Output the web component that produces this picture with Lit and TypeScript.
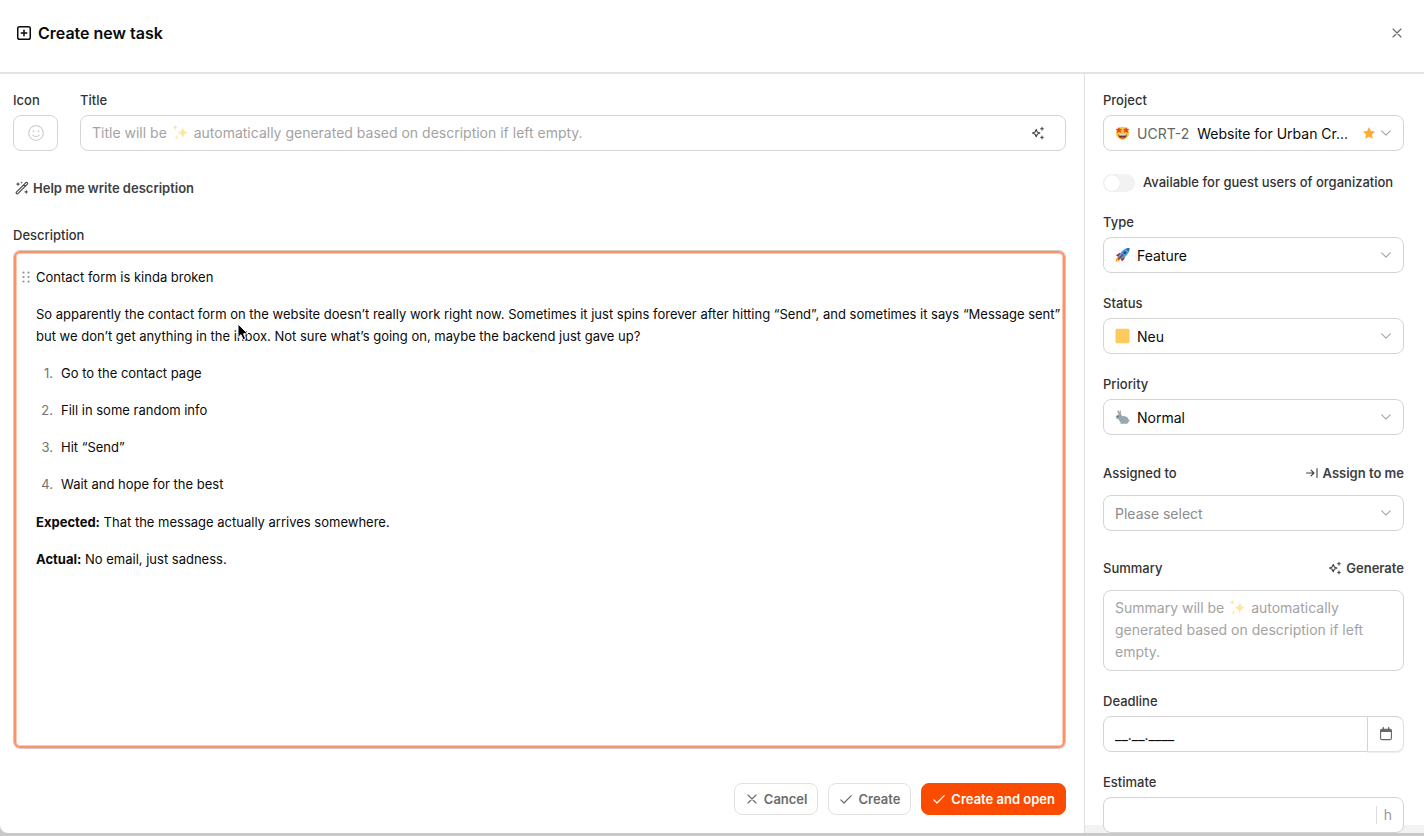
import { LitElement, html, css, svg, TemplateResult } from "lit";
import { customElement } from "lit/decorators.js";

const icon = (size: number, box: string, body: TemplateResult, cls = "") =>
  html`<svg class="icon ${cls}" width=${size} height=${size} viewBox=${box} aria-hidden="true">${body}</svg>`;

const plusBox = icon(16, "0 0 16 16", svg`<g fill="none" stroke="currentColor" stroke-width="1.5" stroke-linecap="round"><rect x="1.75" y="1.75" width="12.5" height="12.5" rx="1.8"/><path d="M8 5.2v5.6M5.2 8h5.6"/></g>`);
const cross = icon(12, "0 0 12 12", svg`<path d="M2 2l8 8M10 2l-8 8" fill="none" stroke="currentColor" stroke-width="1.1" stroke-linecap="round"/>`);
const check = icon(14, "0 0 14 14", svg`<path d="M1.8 7.8l3.2 3.2L12.2 3.6" fill="none" stroke="currentColor" stroke-width="1.2" stroke-linecap="round" stroke-linejoin="round"/>`);
const chevron = icon(10, "0 0 10 10", svg`<path d="M.7 2.8L5 7.1l4.3-4.3" fill="none" stroke="#a3a3a3" stroke-width="1.1" stroke-linecap="round" stroke-linejoin="round"/>`);
const smile = icon(18, "0 0 18 18", svg`<g fill="none" stroke="#d2d2d2" stroke-width="1.3" stroke-linecap="round"><circle cx="9" cy="9" r="7.3"/><path d="M5.8 11.2c1.6 2 4.8 2 6.4 0"/></g><circle cx="6.5" cy="7.2" r="1" fill="#d2d2d2"/><circle cx="11.5" cy="7.2" r="1" fill="#d2d2d2"/>`);
const wand = icon(14, "0 0 14 14", svg`<g fill="none" stroke="currentColor" stroke-width="1.1" stroke-linecap="round" stroke-linejoin="round"><path d="M1.4 11.2L10.9 1.7a.9.9 0 0 1 1.3 0l.2.2a.9.9 0 0 1 0 1.3L2.9 12.7a.9.9 0 0 1-1.3 0l-.2-.2a.9.9 0 0 1 0-1.3zM8.8 3.9l1.5 1.5"/></g><path d="M3 .8l.6 1.7 1.7.6-1.7.6L3 5.4l-.6-1.7-1.7-.6 1.7-.6zM11.2 8.6l.6 1.7 1.7.6-1.7.6-.6 1.7-.6-1.7-1.7-.6 1.7-.6zM6.6.5l.3.8.8.3-.8.3-.3.8-.3-.8-.8-.3.8-.3z" fill="currentColor"/>`);
const generate = icon(14, "0 0 14 14", svg`<path d="M5.200 3.400l1.100 2.600 2.600 1.100-2.600 1.100-1.100 2.600-1.100-2.600L1.500 7.100 4.100 6z" fill="none" stroke="currentColor" stroke-width="1.1" stroke-linejoin="round"/><path d="M11 .8l.5 1.500 1.500.5-1.500.5-.5 1.500-.5-1.500L9 2.800l1.500-.5zM11 9.400l.5 1.500 1.500.5-1.500.5-.5 1.500-.5-1.500-1.500-.5 1.500-.5z" fill="currentColor" stroke="currentColor" stroke-width=".3"/>`);
const assign = icon(14, "0 0 14 14", svg`<path d="M1.5 7h7.2M6 4.1L8.9 7 6 9.9M12 2.6v8.8" fill="none" stroke="currentColor" stroke-width="1.1" stroke-linecap="round" stroke-linejoin="round"/>`);
const calendar = icon(14, "0 0 14 14", svg`<path d="M4.3.8v2M9.7.8v2" stroke="currentColor" stroke-width="1.4" stroke-linecap="round"/><rect x="1.6" y="2.2" width="10.8" height="10.4" rx="1.4" fill="none" stroke="currentColor" stroke-width="1.1"/><path d="M1.6 5V3.5a1.3 1.3 0 0 1 1.3-1.3h8.2a1.3 1.3 0 0 1 1.3 1.3V5z" fill="currentColor"/>`);
const sparkles = icon(17, "0 0 17 17", svg`<g fill="#ffe5a0"><path d="M10.8 2.8c.6 3.6 1.5 4.9 5.2 5.9-3.7 1-4.6 2.3-5.2 5.9-.6-3.6-1.5-4.9-5.2-5.9 3.7-1 4.6-2.3 5.2-5.9z"/><path d="M3.2.8c.3 1.7.8 2.3 2.4 2.8C4 4.100 3.500 4.700 3.200 6.400 2.900 4.700 2.400 4.100.8 3.600 2.400 3.100 2.900 2.500 3.200.8zM4.400 11.200c.2 1.500.7 2 2 2.400-1.300.4-1.800.9-2 2.400-.2-1.500-.7-2-2-2.400 1.300-.4 1.800-.9 2-2.400z"/></g>`, "sparkles");
const starEyes = icon(16, "0 0 16 16", svg`<circle cx="8" cy="8.200" r="7" fill="#ffc341"/><path d="M3.500 9.200h9c0 3-1.900 4.700-4.500 4.700s-4.500-1.700-4.500-4.700z" fill="#65351d"/><path d="M4.100 9.200h7.800c0 1.100-.5 1.500-1.200 1.500H5.300c-.7 0-1.200-.4-1.200-1.500z" fill="#fff"/><path d="M5.400 12.800c1.200-1.100 4-1.100 5.200 0-1.200 1.400-4 1.400-5.200 0z" fill="#f0445c"/><path d="M4.100 1.500l1 2 2.400.2-1.500 1.700.5 2.400-2.200-1-2.300 1.100.4-2.500L.6 3.700l2.500-.3zM11.900 1.500l1 1.900 2.500.3-1.800 1.700.4 2.500-2.300-1.100-2.200 1 .5-2.400-1.500-1.700 2.400-.2z" fill="#e9481d"/>`);
const rocket = icon(16, "0 0 16 16", svg`<path d="M1 8.600l3.500-2.800 3 .4-3 4.200zM7.600 15l2.800-3.600-.4-3-4.300 3z" fill="#a0302a"/><path d="M2.300 10.600C1.200 11.500.8 13.800.8 15.200c1.400 0 3.600-.4 4.600-1.500.7-.8.600-2-.2-2.800-.8-.8-2.100-.9-2.900-.3z" fill="#fd9c2b"/><path d="M1.900 14.100c.1-1.200.5-2.200 1.200-2.600.5-.3 1.100-.1 1.400.3.3.3.3.8 0 1.200-.5.600-1.500 1-2.600 1.100z" fill="#ffd55a"/><path d="M15.500.5c-3.600.2-6.800 1.400-9 4.200C5.200 6.300 4.200 8 3.700 9.800l2.500 2.500c1.800-.5 3.500-1.500 5.100-2.800 2.800-2.200 4-5.400 4.200-9z" fill="#4ba3e3"/><path d="M15.500.5c-1.500.1-2.800.3-4.100.8l3.300 3.300c.5-1.300.7-2.600.8-4.100z" fill="#2f6ba3"/><circle cx="10.500" cy="5.500" r="1.500" fill="#20405f"/><path d="M3.500 12.400c2-1.300 3.700-3 5-5" stroke="#a0302a" stroke-width="1.400" stroke-linecap="round"/>`);
const square = icon(16, "0 0 16 16", svg`<rect x=".5" y=".2" width="15" height="15.600" rx="1.500" fill="#fdcb5c"/>`);
const rabbit = icon(16, "0 0 16 16", svg`<path d="M3.800 5.500C2.600 3.700 2.400 1.500 2.900.6c1 .5 1.900 1.600 2.200 3C5 2.300 5 1 5.500.4c1.100 1.200 1.400 3.300.9 5 .6.4 1 1 1.200 1.700 3.200-.6 6.300.8 7 3.800.8.100 1.200.6 1 1.200-.2.500-.7.700-1.200.6-.2 1.300-1.200 2.600-2.400 2.600H6.600c-1 0-1.300-.9-.5-1.400-.9-.8-1.600-2-1.800-3.300C2.400 10.400.9 9.400.8 8c-.1-1.300 1.400-2.400 3-2.500z" fill="#98a8b3"/><path d="M3.400 1.900c.6.5 1 1.200 1.200 2.100M5.700 1.900c.3.800.3 1.700.1 2.600" stroke="#efb0a8" stroke-width=".7" fill="none"/><circle cx="3.100" cy="7.300" r=".6" fill="#222b31"/>`);
const star = icon(14, "0 0 14 14", svg`<path d="M7 1l1.900 3.900 4.200.6L10 8.500l.8 4.300L7 10.800l-3.800 2 .8-4.300L.9 5.500l4.200-.6z" fill="#ffac2f"/>`);

const base = css`
  *, *::before, *::after { box-sizing: border-box; }
  :host { font-family: Inter, sans-serif; color: #0a0a0a; }
  button, input, textarea, select { font: inherit; color: inherit; margin: 0; }
  .icon { flex: none; display: block; }
  .label { font-size: 13px; line-height: 20px; font-weight: 500; color: #333; }
  .box { height: 36px; border: 1px solid #d4d4d4; border-radius: 8px; background: #fff; }
`;

interface Choice {
  id: string;
  label: string;
  value: string;
  icon?: TemplateResult;
  code?: string;
  starred?: boolean;
  action?: TemplateResult;
}

@customElement("select-field")
export class SelectField extends LitElement {
  static properties = { choice: { attribute: false } };
  declare choice: Choice;

  static styles = [base, css`
    :host { display: flex; flex-direction: column; gap: 5px; }
    .head { display: flex; align-items: center; justify-content: space-between; }
    .head.tall { height: 35px; }
    .control { display: flex; align-items: center; padding: 0 12px 0 11px; font-size: 14px; }
    .control > .icon:first-child { width: 15px; margin-right: 7px; }
    .code { color: #666; margin-right: 8px; }
    select { flex: 1; min-width: 0; height: 34px; appearance: none; border: 0; background: none; padding: 0; outline: none; text-overflow: ellipsis; }
    select.empty { color: #8c8c8c; }
    .tail { display: flex; align-items: center; gap: 5px; }
    .action { display: flex; align-items: center; gap: 4px; border: 0; padding: 0; background: none; font-size: 13px; line-height: 20px; font-weight: 600; color: #404040; }
  `];

  render() {
    const c = this.choice;
    return html`
      <div class="head ${c.action ? "tall" : ""}">
        <label class="label" for=${c.id}>${c.label}</label>
        ${c.action ?? ""}
      </div>
      <div class="box control">
        ${c.icon ?? ""}
        ${c.code ? html`<span class="code">${c.code}</span>` : ""}
        <select id=${c.id} class=${c.icon ? "" : "empty"}><option>${c.value}</option></select>
        <span class="tail">${c.starred ? star : ""}${chevron}</span>
      </div>`;
  }
}

const choices: Choice[] = [
  { id: "type", label: "Type", value: "Feature", icon: rocket },
  { id: "status", label: "Status", value: "Neu", icon: square },
  { id: "priority", label: "Priority", value: "Normal", icon: rabbit },
  {
    id: "assignee", label: "Assigned to", value: "Please select",
    action: html`<button class="action" type="button">${assign}Assign to me</button>`,
  },
];

const steps = ["Go to the contact page", "Fill in some random info", "Hit “Send”", "Wait and hope for the best"];

@customElement("app-root")
export class AppRoot extends LitElement {
  static styles = [base, css`
    :host { box-sizing: border-box; display: flex; flex-direction: column; height: 100vh; padding-bottom: 3px; background: #c9c9c9; }
    .modal { flex: 1; min-height: 0; display: flex; flex-direction: column; background: #fff; border-bottom-left-radius: 8px; overflow: hidden; }
    header { display: flex; align-items: center; justify-content: space-between; height: 74px; flex: none; padding: 0 21px 6px 16px; border-bottom: 2px solid #e3e3e3; }
    h1 { display: flex; align-items: center; gap: 6px; margin: 0; font-size: 16px; line-height: 24px; font-weight: 600; }
    .close { border: 0; padding: 0; background: none; color: #666; }
    .body { flex: 1; min-height: 0; display: flex; }
    main { flex: 1; min-width: 0; display: flex; flex-direction: column; padding: 16px 18px 18px 13px; }
    .row { display: flex; gap: 22px; }
    .field { display: flex; flex-direction: column; gap: 5px; }
    .grow { flex: 1; min-width: 0; }
    .pick { width: 45px; display: flex; align-items: center; justify-content: center; padding: 0; }
    .stack { display: grid; }
    .stack > * { grid-area: 1 / 1; }
    .title, .summary { font-size: 14px; line-height: 22px; }
    .title input { width: 100%; padding: 0 48px 0 11px; }
    .hint { color: #a3a3a3; pointer-events: none; }
    .title .hint { padding: 7px 12px; }
    .hint .sparkles { display: inline-block; vertical-align: -3px; margin: 0 1px; }
    .title button { justify-self: end; align-self: center; margin-right: 21px; padding: 0; border: 0; background: none; color: #404040; }
    .action { display: flex; align-items: center; gap: 4px; border: 0; padding: 0; background: none; font-size: 13px; line-height: 20px; font-weight: 600; color: #404040; }
    .help { align-self: flex-start; margin: 27px 0 27px 2px; }
    .editor { flex: 1; min-height: 0; display: flex; flex-direction: column; gap: 15px; margin-top: 5px; padding: 15px 3px 15px 22px; border: 1px solid #dcc8bf; border-radius: 7px; box-shadow: inset 0 0 0 2px #fb936a, inset 0 0 0 3px #fdc9b3; outline: none; font-size: 13px; line-height: 22px; position: relative; }
    .editor p { margin: 0; }
    ol { list-style: none; margin: 0; padding: 0 0 1px; display: flex; flex-direction: column; gap: 15px; counter-reset: step; }
    li { display: flex; counter-increment: step; }
    li::before { content: counter(step) "."; width: 17px; margin-right: 8px; text-align: right; color: #737373; }
    .grip { position: absolute; left: 8px; top: 20px; }
    .pointer { position: absolute; left: 223px; top: 72px; }
    footer { display: flex; justify-content: flex-end; gap: 10px; margin-top: 34px; }
    .btn { display: flex; align-items: center; gap: 5px; height: 32px; padding: 0 10px; border: 1px solid #e2e2e2; border-radius: 8px; background: #fff; font-size: 13px; font-weight: 600; color: #6b6b6b; }
    .btn > .icon { width: 14px; }
    .btn.primary { border-color: #fa4b00; background: #fa4b00; color: #fff; }
    aside { width: 340px; flex: none; overflow: hidden; border-left: 1px solid #e0e0e0; padding: 16px 20px 0 18px; display: flex; flex-direction: column; gap: 20px; background: linear-gradient(#f2f2f2, #f2f2f2) bottom / 100% 8px no-repeat; }
    aside > * { flex: none; }
    .guest { display: flex; align-items: center; gap: 8px; height: 21px; }
    .guest .label { line-height: 20px; }
    .guest input { appearance: none; width: 32px; height: 18px; margin: 3px 0 0; border-radius: 9px; background: #f2f2f2; display: flex; align-items: center; }
    .guest input::before { content: ""; width: 16px; height: 16px; margin-left: 1px; border-radius: 50%; background: #fff; box-shadow: 0 0 1px #ccc; }
    .head { display: flex; align-items: center; justify-content: space-between; height: 34px; }
    .summary textarea { width: 100%; height: 81px; resize: none; padding: 7px 11px; display: block; }
    .summary .hint { padding: 7px 12px; }
    .date, .estimate { display: flex; font-size: 14px; }
    .date input { flex: 1; min-width: 0; padding: 0 11px; border-radius: 8px 0 0 8px; }
    .date button { width: 37px; margin-left: -1px; padding: 0; display: flex; align-items: center; justify-content: center; border-radius: 0 8px 8px 0; border-color: #d4d4d4 #e2e2e2 #e2e2e2 #d4d4d4; box-shadow: 0 1px 1px #eee; color: #666; }
    .estimate { align-items: center; padding-right: 11px; }
    .estimate input { flex: 1; min-width: 0; height: 34px; padding: 0 11px; border: 0; background: none; outline: none; }
    .unit { border-left: 1px solid #dcdcdc; padding-left: 7px; line-height: 18px; color: #999; }
  `];

  render() {
    return html`
      <div class="modal">
        <header>
          <h1>${plusBox}Create new task</h1>
          <button class="close" type="button" aria-label="Close">${cross}</button>
        </header>
        <div class="body">
          <main>
            <div class="row">
              <div class="field">
                <label class="label" for="icon">Icon</label>
                <button class="box pick" id="icon" type="button">${smile}</button>
              </div>
              <div class="field grow">
                <label class="label" for="title">Title</label>
                <div class="stack title">
                  <input class="box" id="title" type="text" />
                  <span class="hint">Title will be ${sparkles} automatically generated based on description if left empty.</span>
                  <button type="button" aria-label="Generate title">${generate}</button>
                </div>
              </div>
            </div>
            <button class="action help" type="button">${wand}Help me write description</button>
            <span class="label" id="description">Description</span>
            <div class="editor" contenteditable="true" role="textbox" aria-multiline="true" aria-labelledby="description">
              <p>Contact form is kinda broken</p>
              <p>So apparently the contact form on the website doesn’t really work right now. Sometimes it just spins forever after hitting “Send”, and sometimes it says “Message sent” but we don’t get anything in the inbox. Not sure what’s going on, maybe the backend just gave up?</p>
              <ol>${steps.map((s) => html`<li>${s}</li>`)}</ol>
              <p><strong>Expected:</strong> That the message actually arrives somewhere.</p>
              <p><strong>Actual:</strong> No email, just sadness.</p>
              <svg class="grip" width="8" height="12" viewBox="0 0 8 12" aria-hidden="true">
                ${[1.5, 6, 10.5].map((y) => svg`<circle cx="1.5" cy=${y} r="1.1" fill="#8f8f8f"/><circle cx="6.5" cy=${y} r="1.1" fill="#8f8f8f"/>`)}
              </svg>
              <svg class="pointer" width="13" height="19" viewBox="0 0 13 19" aria-hidden="true">
                <path d="M1 1v13.500l3-2.800 2.100 5 2.500-1-2.100-4.900h4.400z" fill="#000" stroke="#fff" stroke-width="1" stroke-linejoin="round"/>
              </svg>
            </div>
            <footer>
              <button class="btn" type="button">${cross}Cancel</button>
              <button class="btn" type="button">${check}Create</button>
              <button class="btn primary" type="button">${check}Create and open</button>
            </footer>
          </main>
          <aside>
            <select-field .choice=${{ id: "project", label: "Project", value: "Website for Urban Cr...", icon: starEyes, code: "UCRT-2", starred: true }}></select-field>
            <div class="guest">
              <input id="guest" type="checkbox" role="switch" />
              <label class="label" for="guest">Available for guest users of organization</label>
            </div>
            ${choices.map((c) => html`<select-field .choice=${c}></select-field>`)}
            <div class="field">
              <div class="head">
                <label class="label" for="summary">Summary</label>
                <button class="action" type="button">${generate}Generate</button>
              </div>
              <div class="stack summary">
                <textarea class="box" id="summary"></textarea>
                <span class="hint">Summary will be ${sparkles} automatically generated based on description if left empty.</span>
              </div>
            </div>
            <div class="field">
              <label class="label" for="deadline">Deadline</label>
              <div class="date">
                <input class="box" id="deadline" type="text" value="__.__.____" />
                <button class="box" type="button" aria-label="Open calendar">${calendar}</button>
              </div>
            </div>
            <div class="field">
              <label class="label" for="estimate">Estimate</label>
              <div class="box estimate">
                <input id="estimate" type="text" />
                <span class="unit">h</span>
              </div>
            </div>
          </aside>
        </div>
      </div>`;
  }
}
